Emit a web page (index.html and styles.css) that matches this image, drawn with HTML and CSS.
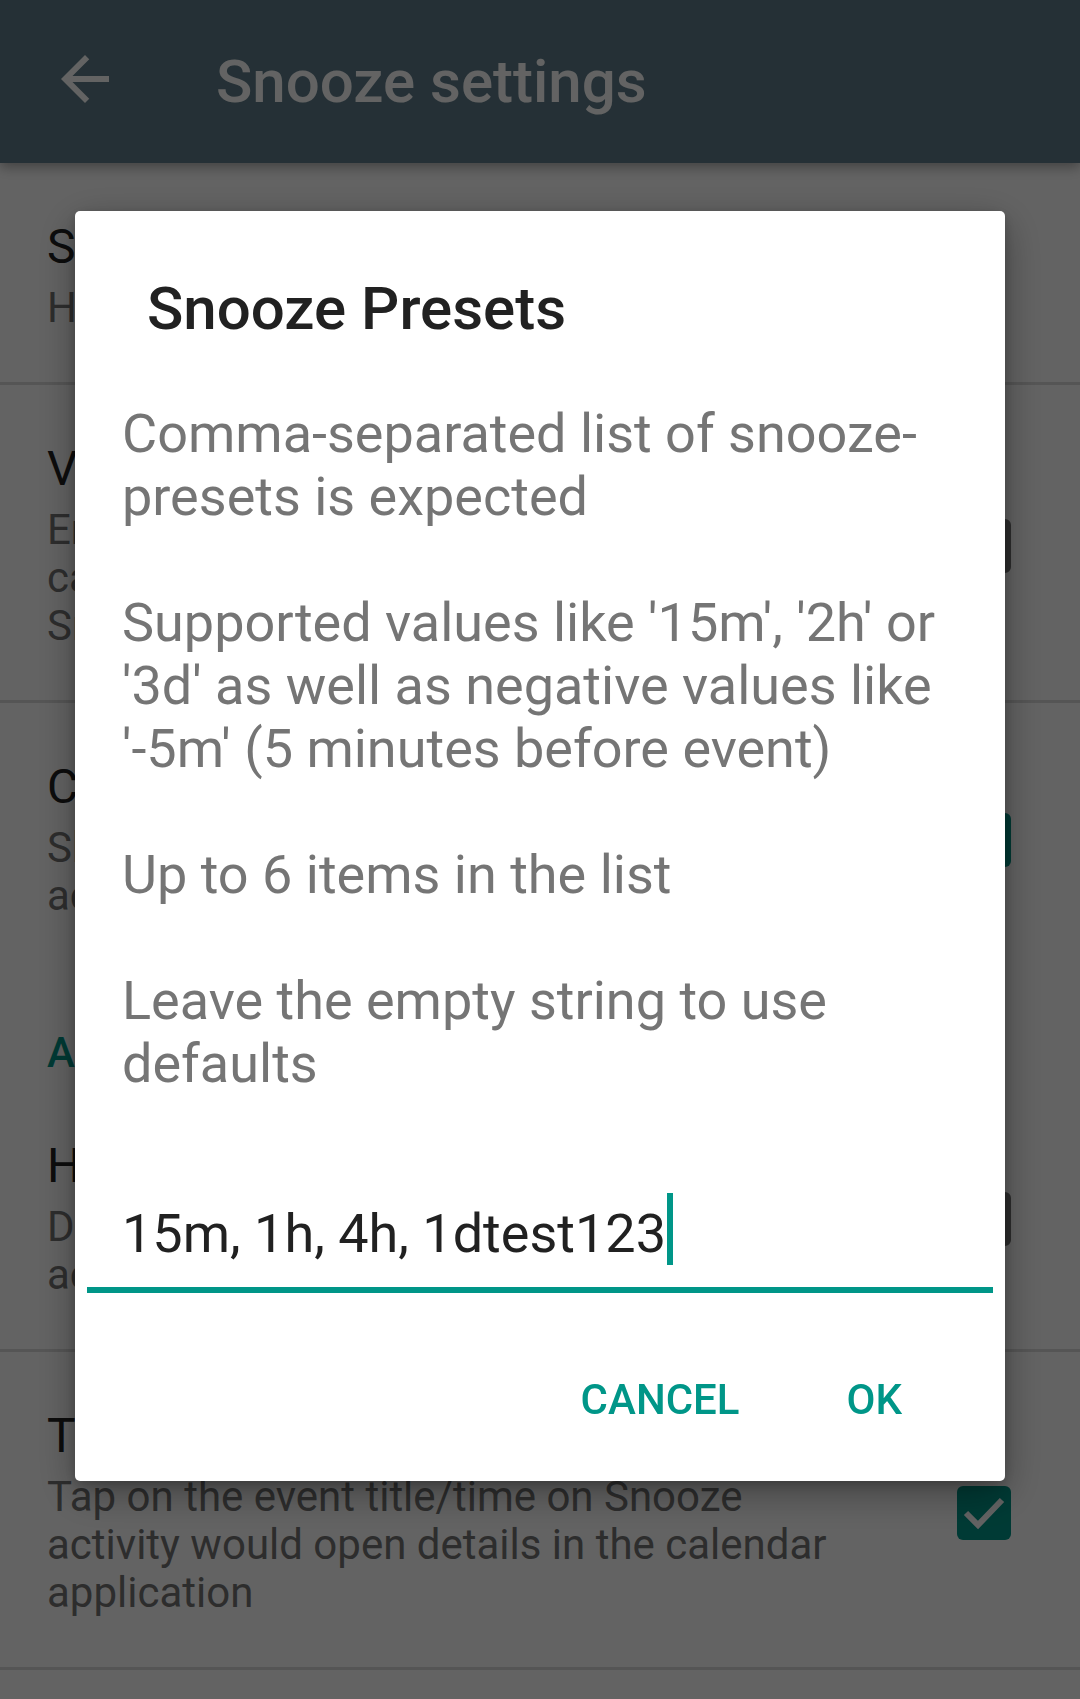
FILE: index.html
```html
<!DOCTYPE html>
<html lang="en">
<head>
<meta charset="utf-8">
<title>Snooze settings</title>
<link rel="stylesheet" href="styles.css">
</head>
<body>
<div class="screen">
  <header class="appbar">
    <svg class="back" viewBox="0 0 24 24" aria-hidden="true"><path d="M20 11H7.83l5.59-5.59L12 4l-8 8 8 8 1.41-1.41L7.83 13H20v-2z"/></svg>
    <h1 class="appbar-title">Snooze settings</h1>
  </header>
  <main class="prefs">
    <div class="pref divided">
      <div class="pref-text">
        <div class="pref-title">Snooze presets</div>
        <div class="pref-summary">Hold to edit: 15m, 1h, 4h, 1d</div>
      </div>
    </div>
    <div class="pref divided">
      <div class="pref-text">
        <div class="pref-title">View after edit</div>
        <div class="pref-summary">Enable to view the event in the<br>calendar after editing it from the<br>Snooze activity</div>
      </div>
      <span class="cb"></span>
    </div>
    <div class="pref">
      <div class="pref-text">
        <div class="pref-title">Confirm snooze</div>
        <div class="pref-summary">Show a confirmation on Snooze<br>activity before snoozing</div>
      </div>
      <span class="cb on"><svg viewBox="0 0 54 54"><polyline points="9,27 21,39 45,14"/></svg></span>
    </div>
    <div class="pref-category">Advanced</div>
    <div class="pref divided">
      <div class="pref-text">
        <div class="pref-title">Hide snooze button</div>
        <div class="pref-summary">Don't show the snooze button on<br>activity screen</div>
      </div>
      <span class="cb"></span>
    </div>
    <div class="pref divided">
      <div class="pref-text">
        <div class="pref-title">Tap opens calendar</div>
        <div class="pref-summary">Tap on the event title/time on Snooze activity would open details in the calendar application</div>
      </div>
      <span class="cb on"><svg viewBox="0 0 54 54"><polyline points="9,27 21,39 45,14"/></svg></span>
    </div>
  </main>
</div>

<div class="scrim">
  <div class="dialog" role="dialog">
    <h2 class="dialog-title">Snooze Presets</h2>
    <div class="dialog-body">
      <p>Comma-separated list of snooze-presets is expected</p>
      <p>Supported values like '15m', '2h' or '3d' as well as negative values like '-5m' (5 minutes before event)</p>
      <p>Up to 6 items in the list</p>
      <p>Leave the empty string to use defaults</p>
    </div>
    <div class="field"><span class="field-text">15m, 1h, 4h, 1dtest123</span><span class="caret"></span></div>
    <div class="actions">
      <span class="btn">Cancel</span>
      <span class="btn">OK</span>
    </div>
  </div>
</div>
</body>
</html>
```

FILE: styles.css
```css
* { box-sizing: border-box; }

html, body {
  margin: 0;
  padding: 0;
  width: 1080px;
  height: 1699px;
  overflow: hidden;
  background: #fff;
  font-family: Roboto, "Noto Sans", "Liberation Sans", sans-serif;
}

.screen {
  width: 1080px;
  height: 1699px;
  background: #fff;
}

.appbar {
  position: relative;
  z-index: 1;
  height: 163px;
  background: #607d8b;
  display: flex;
  align-items: center;
  padding-left: 49px;
  box-shadow: 0 4px 12px rgba(0, 0, 0, 0.35);
}

.back {
  width: 72px;
  height: 72px;
  flex: none;
  fill: #fff;
  margin-top: -5px;
}

.appbar-title {
  margin: 0 0 0 95px;
  font-size: 60px;
  line-height: 70px;
  font-weight: 500;
  color: #fff;
}

.prefs {
  display: flex;
  flex-direction: column;
}

.pref {
  display: flex;
  align-items: center;
  padding: 56px 69px 50px 47px;
}

.pref.divided {
  border-bottom: 3px solid #dcdcdc;
}

.pref-text {
  flex: 1;
  min-width: 0;
}

.pref-title {
  font-size: 48px;
  line-height: 56px;
  color: #212121;
  white-space: nowrap;
}

.pref-summary {
  margin-top: 9px;
  font-size: 42px;
  line-height: 48px;
  color: #757575;
}

.pref-category {
  padding: 59px 47px 5px;
  font-size: 42px;
  line-height: 48px;
  font-weight: 500;
  color: #009688;
}

.cb {
  flex: none;
  width: 54px;
  height: 54px;
  margin-left: 90px;
  border: 6px solid #757575;
  border-radius: 6px;
  display: flex;
  align-items: center;
  justify-content: center;
}

.cb.on {
  background: #009688;
  border: none;
}

.cb svg {
  width: 54px;
  height: 54px;
  fill: none;
  stroke: #fff;
  stroke-width: 6;
}

/* dialog overlay */
.scrim {
  position: fixed;
  inset: 0;
  z-index: 10;
  background: rgba(0, 0, 0, 0.612);
  display: flex;
  justify-content: center;
  align-items: flex-start;
  padding-top: 211px;
}

.dialog {
  width: 930px;
  background: #fff;
  border-radius: 5px;
  padding-top: 63px;
  box-shadow: 0 12px 40px rgba(0, 0, 0, 0.35), 0 4px 12px rgba(0, 0, 0, 0.2);
}

.dialog-title {
  margin: 0 72px;
  font-size: 60px;
  line-height: 70px;
  font-weight: 500;
  color: #212121;
}

.dialog-body {
  margin-top: 58px;
  padding: 0 43px 0 47px;
  font-size: 54px;
  line-height: 63px;
  color: #757575;
}

.dialog-body p {
  margin: 0 0 63px;
}

.dialog-body p:last-child {
  margin-bottom: 0;
}

.field {
  margin: 107px 12px 0;
  padding: 0 0 22px 35px;
  border-bottom: 6px solid #009688;
  font-size: 54px;
  line-height: 63px;
  color: #212121;
  white-space: nowrap;
}

.caret {
  display: inline-block;
  width: 6px;
  height: 72px;
  margin: -9px 0 0 1px;
  vertical-align: -13px;
  background: #009688;
}

.actions {
  margin-top: 83px;
  padding: 0 103px 57px 0;
  display: flex;
  justify-content: flex-end;
  gap: 107px;
}

.btn {
  font-size: 42px;
  line-height: 48px;
  font-weight: 500;
  color: #009688;
  text-transform: uppercase;
}
```
